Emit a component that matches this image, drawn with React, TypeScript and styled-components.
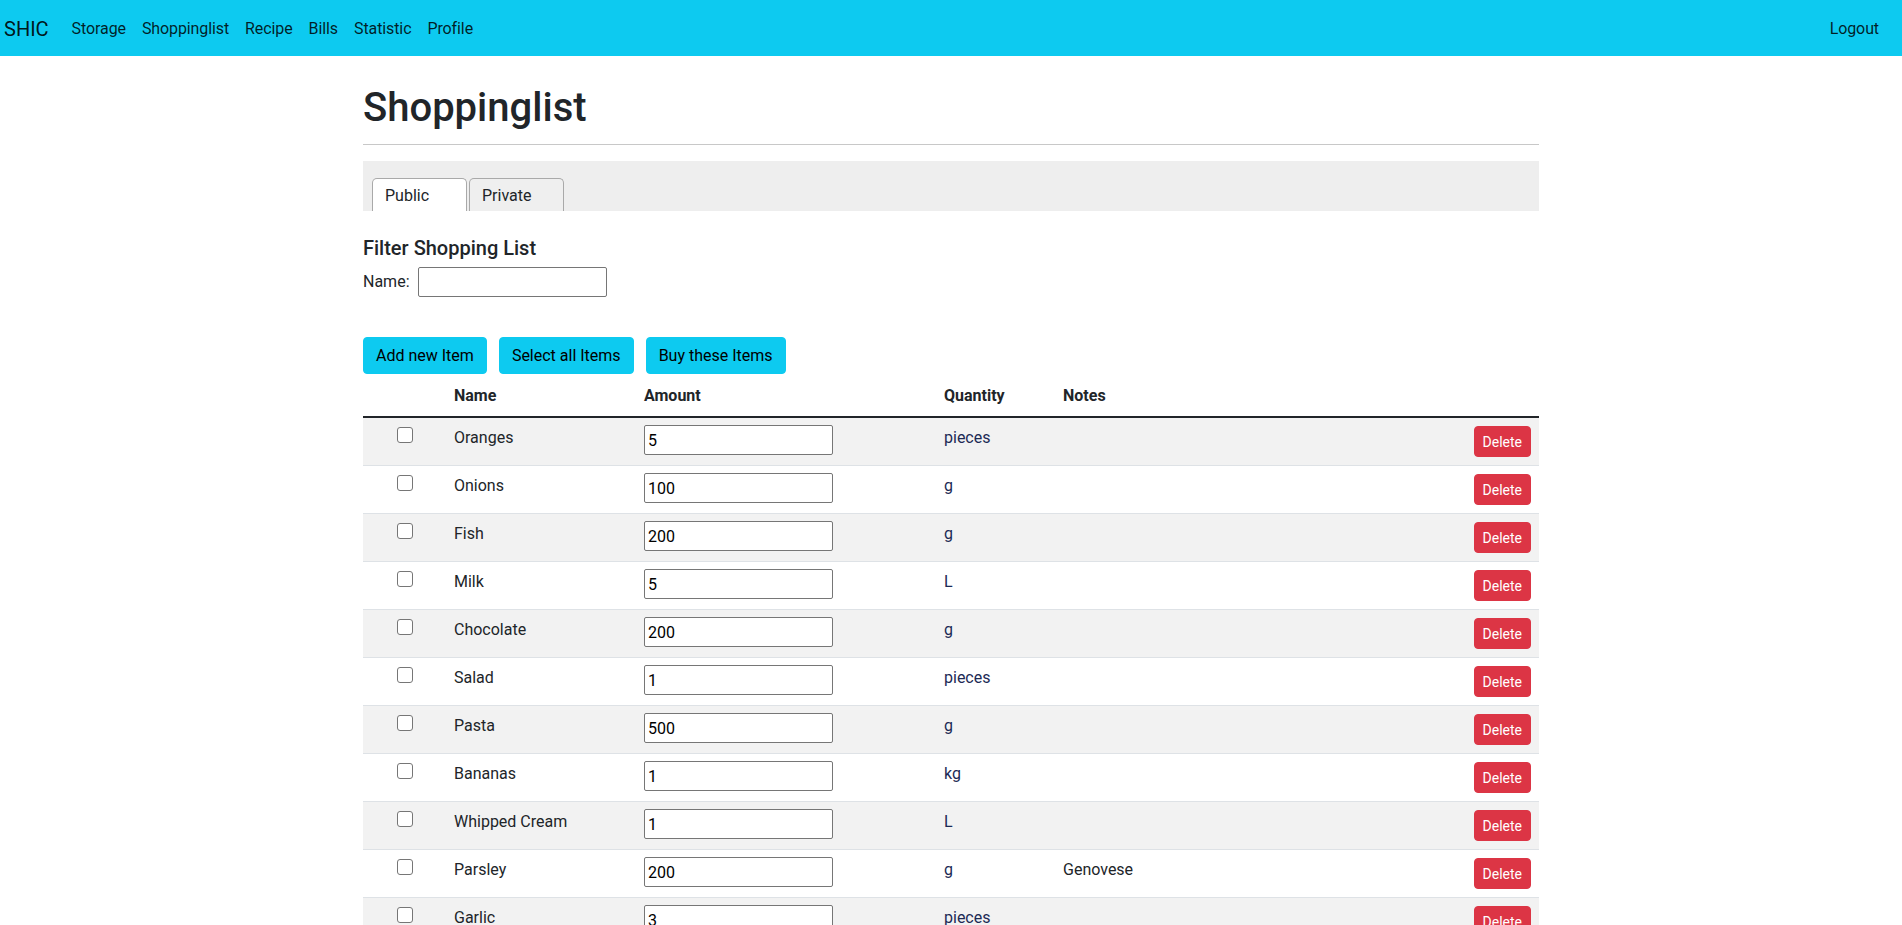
import React from "react";
import styled, { createGlobalStyle } from "styled-components";

const GlobalStyle = createGlobalStyle`
  html, body { margin: 0; padding: 0; background: #fff; }
  body {
    font-family: Roboto, "Noto Sans", "Liberation Sans", sans-serif;
    font-size: 16px;
    line-height: 1.5;
    color: #212529;
  }
  * { box-sizing: border-box; }
`;

const Navbar = styled.nav`
  display: flex;
  align-items: center;
  height: 56px;
  padding: 2px 15px 0 4px;
  background: #0dcaf0;
`;

const Brand = styled.a`
  font-size: 20px;
  line-height: 30px;
  color: rgba(0, 0, 0, 0.9);
  margin-right: 15px;
  text-decoration: none;
`;

const NavList = styled.div`
  display: flex;
  flex: 1;
`;

const NavLink = styled.a`
  padding: 8px 8px;
  line-height: 24px;
  font-size: 16px;
  color: rgba(0, 0, 0, 0.85);
  text-decoration: none;
  letter-spacing: -0.1px;
`;

const Container = styled.main`
  max-width: 1176px;
  margin: 0 auto;
`;

const Title = styled.h1`
  font-size: 40px;
  font-weight: 500;
  line-height: 1.2;
  margin: 28px 0 12px;
`;

const Rule = styled.hr`
  border: 0;
  border-top: 1px solid #c8c8c8;
  margin: 0 0 16px;
`;

const TabBar = styled.div`
  display: flex;
  gap: 2px;
  height: 50px;
  align-items: flex-end;
  padding: 0 8px 0 9px;
  background: #eeeeee;
`;

const Tab = styled.div<{ $active?: boolean }>`
  width: 95px;
  height: 33px;
  padding: 5px 12px 0;
  font-size: 16px;
  line-height: 24px;
  border: 1px solid #a9a9a9;
  border-bottom: none;
  border-radius: 5px 5px 0 0;
  background: ${(p) => (p.$active ? "#fff" : "#efefef")};
  color: #212529;
`;

const FilterTitle = styled.h5`
  font-size: 20px;
  font-weight: 500;
  line-height: 1.2;
  margin: 25px 0 7px;
`;

const FilterRow = styled.div`
  display: flex;
  align-items: center;
  gap: 8px;
  height: 30px;
`;

const TextInput = styled.input`
  width: 189px;
  height: 30px;
  padding: 1px 3px;
  font-family: inherit;
  font-size: 16px;
  color: #000;
  border: 1px solid #767676;
  border-radius: 2px;
  background: #fff;
`;

const ButtonRow = styled.div`
  display: flex;
  gap: 12px;
  margin-top: 40px;
  margin-bottom: 2px;
`;

const InfoButton = styled.button`
  height: 37px;
  padding: 0 12px;
  font-family: inherit;
  font-size: 16px;
  color: #000;
  background: #0dcaf0;
  border: 1px solid #0dcaf0;
  border-radius: 4px;
`;

const Table = styled.table`
  width: 100%;
  border-collapse: collapse;
  table-layout: fixed;
`;

const Th = styled.th<{ $w?: number }>`
  width: ${(p) => (p.$w ? `${p.$w}px` : "auto")};
  padding: 8px;
  text-align: left;
  font-weight: 700;
  line-height: 24px;
  border-bottom: 2px solid #212529;
`;

const Row = styled.tr<{ $striped: boolean }>`
  background: ${(p) => (p.$striped ? "#f2f2f2" : "#fff")};
  border-bottom: 1px solid #dee2e6;
`;

const Td = styled.td<{ $center?: boolean; $right?: boolean; $muted?: boolean }>`
  padding: 8px 8px 8px;
  vertical-align: top;
  line-height: 24px;
  text-align: ${(p) => (p.$center ? "center" : p.$right ? "right" : "left")};
  color: ${(p) => (p.$muted ? "#1c2a55" : "#212529")};
  height: 48px;
`;

const Check = styled.input`
  appearance: none;
  width: 16px;
  height: 16px;
  margin: 1px 0 0;
  border: 1px solid #767676;
  border-radius: 3px;
  background: #fff;
  vertical-align: top;
`;

const AmountInput = styled(TextInput)`
  display: block;
  margin-top: -1px;
`;

const DeleteButton = styled.button`
  height: 31px;
  padding: 0 8px;
  font-family: inherit;
  font-size: 14px;
  color: #fff;
  background: #dc3545;
  border: 1px solid #dc3545;
  border-radius: 4px;
`;

const items = [
  { name: "Oranges", amount: "5", q: "pieces", notes: "" },
  { name: "Onions", amount: "100", q: "g", notes: "" },
  { name: "Fish", amount: "200", q: "g", notes: "" },
  { name: "Milk", amount: "5", q: "L", notes: "" },
  { name: "Chocolate", amount: "200", q: "g", notes: "" },
  { name: "Salad", amount: "1", q: "pieces", notes: "" },
  { name: "Pasta", amount: "500", q: "g", notes: "" },
  { name: "Bananas", amount: "1", q: "kg", notes: "" },
  { name: "Whipped Cream", amount: "1", q: "L", notes: "" },
  { name: "Parsley", amount: "200", q: "g", notes: "Genovese" },
  { name: "Garlic", amount: "3", q: "pieces", notes: "" },
];

export default function App() {
  return (
    <>
      <GlobalStyle />
      <Navbar>
        <Brand>SHIC</Brand>
        <NavList>
          <NavLink>Storage</NavLink>
          <NavLink>Shoppinglist</NavLink>
          <NavLink>Recipe</NavLink>
          <NavLink>Bills</NavLink>
          <NavLink>Statistic</NavLink>
          <NavLink>Profile</NavLink>
        </NavList>
        <NavLink>Logout</NavLink>
      </Navbar>
      <Container>
        <Title>Shoppinglist</Title>
        <Rule />
        <TabBar>
          <Tab $active>Public</Tab>
          <Tab>Private</Tab>
        </TabBar>
        <FilterTitle>Filter Shopping List</FilterTitle>
        <FilterRow>
          <span>Name:</span>
          <TextInput type="text" />
        </FilterRow>
        <ButtonRow>
          <InfoButton>Add new Item</InfoButton>
          <InfoButton>Select all Items</InfoButton>
          <InfoButton>Buy these Items</InfoButton>
        </ButtonRow>
        <Table>
          <thead>
            <tr>
              <Th $w={83}></Th>
              <Th $w={190}>Name</Th>
              <Th $w={300}>Amount</Th>
              <Th $w={119}>Quantity</Th>
              <Th>Notes</Th>
              <Th $w={74}></Th>
            </tr>
          </thead>
          <tbody>
            {items.map((it, i) => (
              <Row key={it.name} $striped={i % 2 === 0}>
                <Td $center>
                  <Check type="checkbox" />
                </Td>
                <Td>{it.name}</Td>
                <Td>
                  <AmountInput type="text" defaultValue={it.amount} />
                </Td>
                <Td $muted>{it.q}</Td>
                <Td>{it.notes}</Td>
                <Td $right>
                  <DeleteButton>Delete</DeleteButton>
                </Td>
              </Row>
            ))}
          </tbody>
        </Table>
      </Container>
    </>
  );
}
